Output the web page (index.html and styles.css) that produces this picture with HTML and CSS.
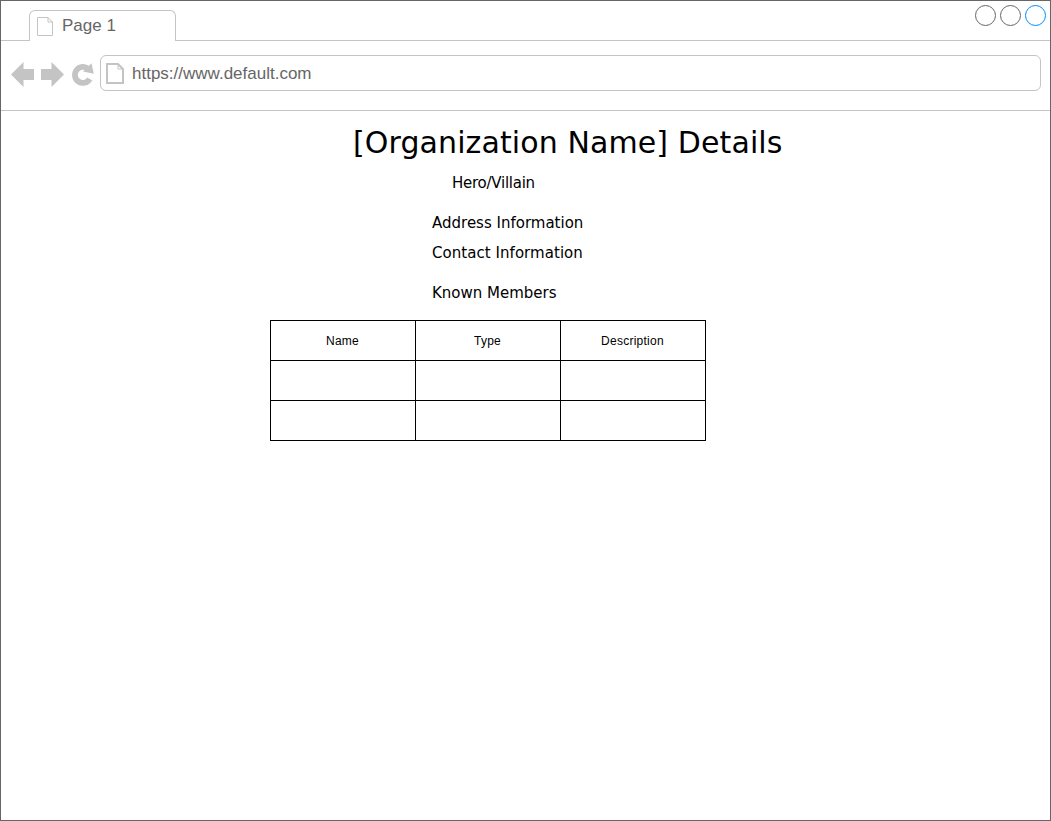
FILE: index.html
```html
<!DOCTYPE html>
<html lang="en">
<head>
<meta charset="utf-8">
<title>Organization Details</title>
<link rel="stylesheet" href="styles.css">
</head>
<body>
<div class="window">
  <header class="tab-bar">
    <div class="tab">
      <svg class="tab-icon" width="18" height="20" viewBox="0 0 18 20"><path d="M1.500 1.500H12L16.500 6V19.500H1.500ZM12 1.500V6H16.500" fill="none" stroke="#c4c4c4"/></svg>
      <span>Page 1</span>
    </div>
    <div class="controls">
      <span class="control"></span>
      <span class="control"></span>
      <span class="control control-active"></span>
    </div>
  </header>
  <nav class="toolbar">
    <svg class="nav-icons" width="99" height="36" viewBox="1 55 99 36">
      <g fill="#c4c4c4">
        <path d="M11 74.500L23.500 62V69H34V80H23.500V87Z"/>
        <path d="M64 74.500L51.500 62V69H41V80H51.500V87Z"/>
        <path d="M91.500 63.300L93.800 73.800L83 71.600Z"/>
      </g>
      <path d="M88.300 69A8 8 0 1 0 89.800 79" fill="none" stroke="#c4c4c4" stroke-width="5.800"/>
    </svg>
    <div class="address">
      <svg class="page-icon" width="20" height="22" viewBox="0 0 20 22"><path d="M2 1H13L18 6V20H2Z" fill="none" stroke="#c4c4c4" stroke-width="2"/><path d="M13 1V6H18" fill="none" stroke="#c4c4c4"/></svg>
      <span class="url">https://www.default.com</span>
    </div>
  </nav>
  <main class="content">
    <h1 class="title">[Organization Name] Details</h1>
    <p class="alignment">Hero/Villain</p>
    <p class="line address-info">Address Information</p>
    <p class="line contact-info">Contact Information</p>
    <p class="line members">Known Members</p>
    <table class="member-table">
      <tr><th>Name</th><th>Type</th><th>Description</th></tr>
      <tr><td></td><td></td><td></td></tr>
      <tr><td></td><td></td><td></td></tr>
    </table>
  </main>
</div>
</body>
</html>
```
FILE: styles.css
```css
* { box-sizing: border-box; }
body { margin: 0; background: #fff; }
.window {
  width: 1051px;
  height: 821px;
  border: 1px solid #666;
  overflow: hidden;
  font-family: "Liberation Sans", Arial, sans-serif;
}
.tab-bar {
  display: flex;
  justify-content: space-between;
  height: 40px;
  padding: 9px 0 0 28px;
  border-bottom: 1px solid #c4c4c4;
}
.tab {
  display: flex;
  width: 147px;
  height: 31px;
  padding: 5px 0 0 6px;
  border: 1px solid #c4c4c4;
  border-bottom: 0;
  border-radius: 6px 6px 0 0;
  background: #fff;
  color: #666;
  font-size: 17px;
  line-height: 20px;
}
.tab-icon { margin-right: 8px; }
.controls { display: flex; gap: 4px; margin: -5px 4px 0 0; }
.control { width: 21px; height: 21px; border: 1px solid #666; border-radius: 50%; }
.control-active { border-color: #008cff; }
.toolbar {
  display: flex;
  height: 70px;
  padding-top: 14px;
  border-bottom: 1px solid #c4c4c4;
}
.address {
  display: flex;
  width: 941px;
  height: 36px;
  padding: 7px 0 0 4px;
  border: 1px solid #c4c4c4;
  border-radius: 6px;
  color: #666;
  font-size: 17px;
  line-height: 20px;
}
.page-icon { margin-right: 7px; }
.url { padding-top: 1px; }
.content { color: #000; font-family: "DejaVu Sans", Verdana, sans-serif; }
.title { margin: 12px 0 0 352px; font-size: 30px; font-weight: 400; line-height: 40px; letter-spacing: 0.1px; white-space: nowrap; }
.alignment, .line { margin: 0 0 0 431px; font-size: 15px; line-height: 20px; }
.alignment { margin: 10px 0 0 451px; letter-spacing: -0.25px; }
.address-info { margin-top: 20px; }
.contact-info { margin-top: 10px; letter-spacing: 0.05px; }
.members { margin-top: 20px; }
.member-table {
  width: 436px;
  margin: 17px 0 0 269px;
  border-collapse: collapse;
  table-layout: fixed;
  font: 12px "Liberation Sans", Arial, sans-serif;
  letter-spacing: 0.25px;
}
.member-table th, .member-table td { height: 40px; padding: 0 1px 0 0; border: 1px solid #000; font-weight: 400; }
```
